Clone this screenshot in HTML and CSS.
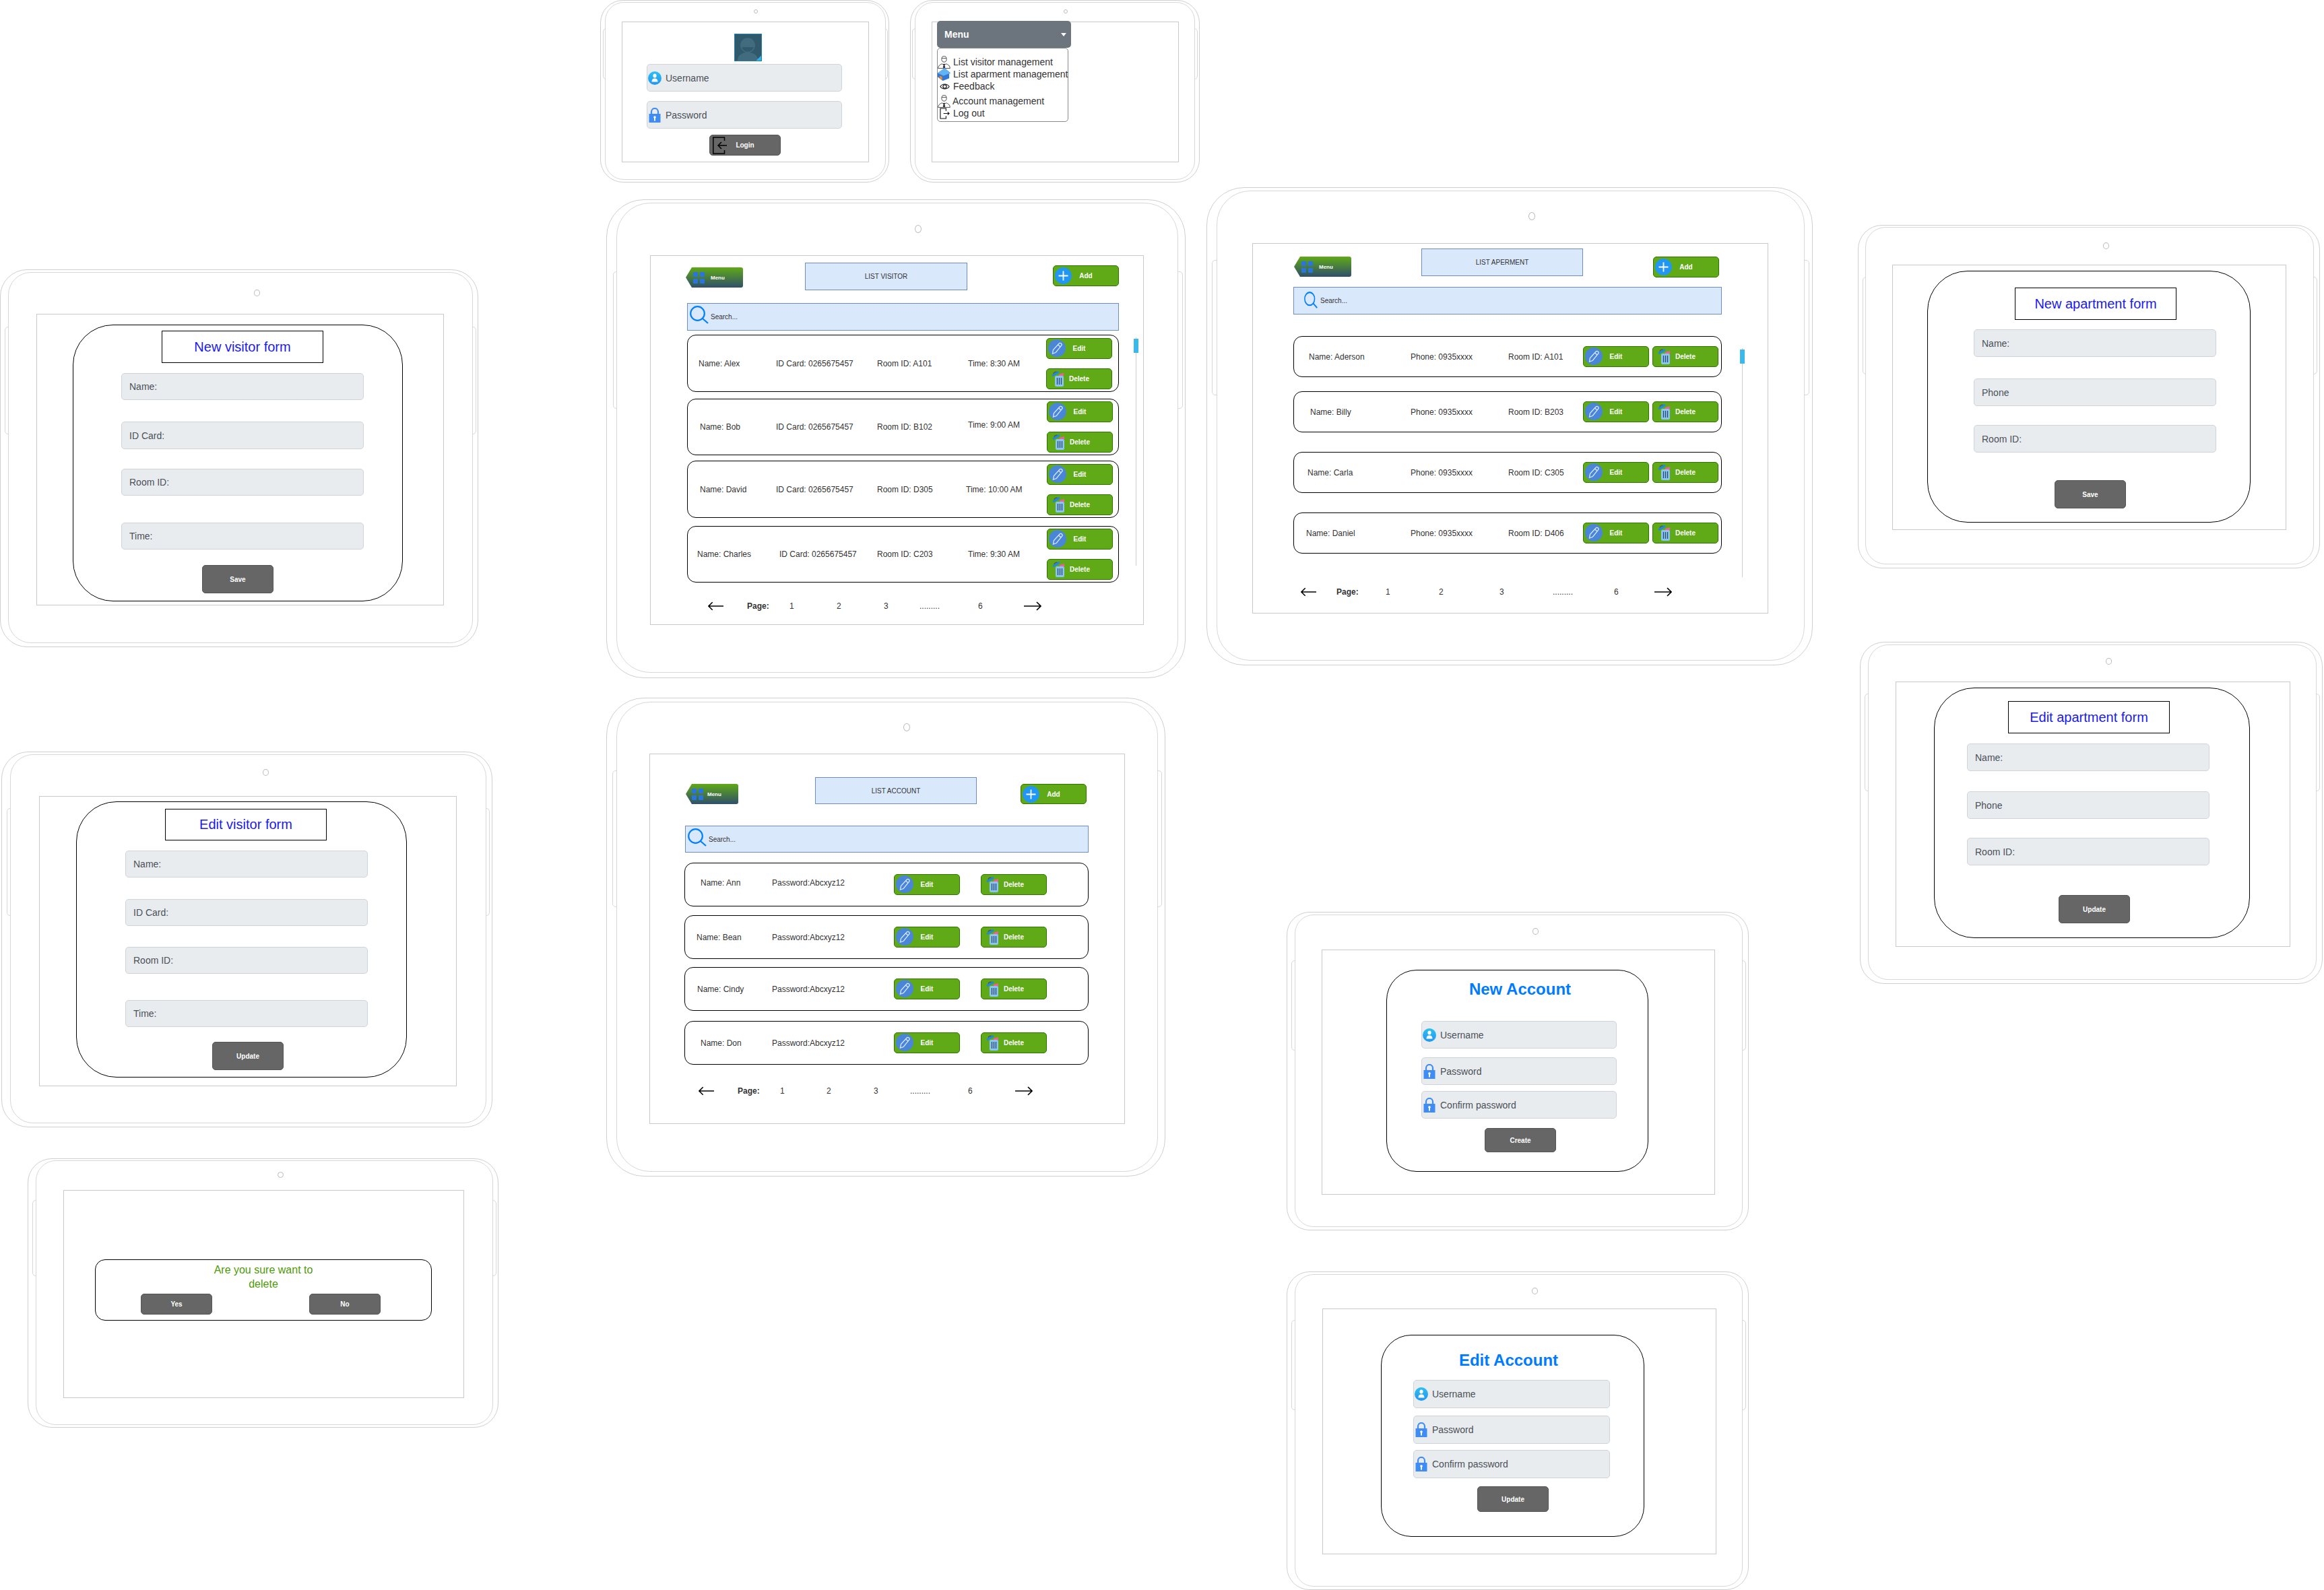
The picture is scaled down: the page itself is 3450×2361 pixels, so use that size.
FILE: index.html
```html
<!DOCTYPE html>
<html lang="en">
  <head>
    <meta charset="UTF-8" />
    <title>Apartment management wireframes</title>
    <link rel="stylesheet" href="styles.css">
  </head>
  <body>
    <svg class="svg-defs" aria-hidden="true">
      <defs>
        <linearGradient id="blueFade" x1="0" y1="0" x2="0" y2="1">
          <stop offset="0" stop-color="#2dc0f0" />
          <stop offset="1" stop-color="#2196f3" />
        </linearGradient>
        <symbol id="ic-user" viewBox="0 0 20 20">
          <circle cx="10" cy="10" r="10" fill="url(#blueFade)" />
          <ellipse cx="10" cy="6.5" rx="2.6" ry="3" fill="#fff" />
          <path d="M5.5 15.5c0-3.2 1.6-5 4.5-5s4.500 1.800 4.500 5z" fill="#fff" />
        </symbol>
        <symbol id="ic-lock" viewBox="0 0 17 22">
          <path d="M3.500 10V6a5 5 0 0 1 10 0v4" fill="none" stroke="#3f8cf5" stroke-width="2.200" />
          <rect y="9" width="17" height="13" fill="#3f8cf5" />
          <circle cx="8.500" cy="14" r="1.800" fill="#fff" />
          <rect x="7.500" y="14" width="2" height="5.500" fill="#fff" />
        </symbol>
        <symbol id="ic-avatar" viewBox="0 0 41 41">
          <rect width="41" height="41" fill="#30596c" />
          <circle cx="20" cy="17" r="11.500" fill="#416b7e" />
          <path d="M11 20h18c-1 5-5 7-9 7s-8-2-9-7z" fill="#30596c" />
          <path d="M4 41c0-8 7-13 16-13s16 5 16 13z" fill="#416b7e" />
          <path d="M41 33v8h-8z" fill="#2fb2e8" />
        </symbol>
        <symbol id="ic-door-in" viewBox="0 0 22 26">
          <path d="M17.500 6V1H.8v24h16.700v-5" fill="none" stroke="#000" stroke-width="1.500" />
          <path d="M21 13H8M13 8l-5 5 5 5" fill="none" stroke="#000" stroke-width="1.500" />
        </symbol>
        <symbol id="ic-door-out" viewBox="0 0 16 18">
          <path d="M10 5V1H1v16h9v-4" fill="none" stroke="#111" stroke-width="1.200" />
          <path d="M6 9h9M12.500 6.800 15 9l-2.500 2.200" fill="none" stroke="#111" stroke-width="1.200" />
        </symbol>
        <symbol id="ic-staff" viewBox="0 0 20 20">
          <ellipse cx="10" cy="5" rx="3.800" ry="4.600" fill="#fff" stroke="#333" stroke-width=".9" />
          <path d="M6.400 3.600h7.200" stroke="#333" stroke-width=".9" />
          <path d="M.7 19.400c0-4 3-6 6.200-7l3.100 2.300 3.100-2.300c3.200 1 6.200 3 6.200 7z" fill="#fff" stroke="#333" stroke-width=".9" />
          <path d="M8.400 13.400 10 12l1.600 1.400-1 1.600 1.400 3-2 1.200-2-1.200 1.400-3z" fill="#222" />
        </symbol>
        <symbol id="ic-house" viewBox="0 0 20 20">
          <path d="M11 0l9 8-2 1v7l-10 4-8-6V8z" fill="#2f78d8" />
          <path d="M11 0l9 8-11 4-9-4z" fill="#63b3f2" />
          <path d="M3 12l4 1.500V19l-4-2.500z" fill="#f08a24" />
        </symbol>
        <symbol id="ic-eye" viewBox="0 0 16 12">
          <path d="M1 6c3-5 11-5 14 0-3 5-11 5-14 0z" fill="none" stroke="#111" stroke-width="1.200" />
          <circle cx="8" cy="6" r="2.800" fill="none" stroke="#111" stroke-width="1.200" />
        </symbol>
        <symbol id="ic-plus" viewBox="0 0 25 25">
          <circle cx="12.500" cy="12.500" r="12.500" fill="#2196f3" />
          <path d="M5.500 12.500h14M12.500 5.500v14" stroke="#fff" stroke-width="1.800" />
        </symbol>
        <symbol id="ic-pencil" viewBox="0 0 26 26">
          <circle cx="13" cy="13" r="13" fill="#4a86d8" />
          <path d="M6.500 21l1-5.500L16 6.200a2.300 2.300 0 0 1 3.600 3L11.200 19.500z" fill="none" stroke="#d9e8ff" stroke-width="1.300" />
          <path d="M14.500 8l3.700 3" stroke="#d9e8ff" stroke-width="1.300" />
        </symbol>
        <symbol id="ic-trash" viewBox="0 0 18 24">
          <path d="M3 5.500a3.500 3.500 0 0 1 5-3" fill="none" stroke="#555" stroke-width="1.500" />
          <path d="M1 8l10-6" stroke="#1e88e5" stroke-width="3" />
          <path d="M11 6l7-2v4h-7z" fill="#f0609a" />
          <rect x="5" y="8" width="13" height="16" rx="2" fill="#8ac4f5" />
          <path d="M8.500 11v10M11.500 11v10M14.500 11v10" stroke="#2c4a66" stroke-width="1.300" />
        </symbol>
        <symbol id="ic-search" viewBox="0 0 28 28">
          <circle cx="11.500" cy="11.500" r="10.300" fill="none" stroke="#007fff" stroke-width="2.200" />
          <path d="M19 19l8 7" stroke="#007fff" stroke-width="2.200" />
        </symbol>
        <symbol id="ic-arrow-left" viewBox="0 0 24 14">
          <path d="M24 7H1M7 1 1 7l6 6" fill="none" stroke="#000" stroke-width="1.600" />
        </symbol>
        <symbol id="ic-arrow-right" viewBox="0 0 26 14">
          <path d="M0 7h25M19 1l6 6-6 6" fill="none" stroke="#000" stroke-width="1.600" />
        </symbol>
      </defs>
    </svg>

    <main class="canvas">
      <!-- login -->
      <section class="tablet t-login">
        <span class="camera"></span>
        <div class="bezel">
          <div class="screen">
            <svg class="avatar"><use href="#ic-avatar" /></svg>
            <div class="field with-icon"><svg class="ic-field"><use href="#ic-user" /></svg>Username</div>
            <div class="field with-icon"><svg class="ic-field"><use href="#ic-lock" /></svg>Password</div>
            <button class="btn-dark"><svg class="ic-door"><use href="#ic-door-in" /></svg>Login</button>
          </div>
        </div>
      </section>

      <!-- menu -->
      <section class="tablet t-menu">
        <span class="camera"></span>
        <div class="bezel">
          <div class="screen">
            <div class="menu-head">Menu<span class="caret"></span></div>
            <ul class="menu-list">
              <li><svg class="ic-menu"><use href="#ic-staff" /></svg>List visitor management</li>
              <li><svg class="ic-menu"><use href="#ic-house" /></svg>List aparment management</li>
              <li><svg class="ic-menu ic-small"><use href="#ic-eye" /></svg>Feedback</li>
              <li><svg class="ic-menu"><use href="#ic-staff" /></svg>Account management</li>
              <li><svg class="ic-menu ic-small"><use href="#ic-door-out" /></svg>Log out</li>
            </ul>
          </div>
        </div>
      </section>

      <!-- list visitor -->
      <section class="tablet t-visitors">
        <span class="camera"></span>
        <div class="bezel">
          <div class="screen">
            <div class="list-head">
              <div class="menu-tag"><span class="dots-grid"><i></i><i></i><i></i><i></i></span>Menu</div>
              <div class="list-title">LIST VISITOR</div>
              <button class="btn-green btn-add"><svg class="ic-plus"><use href="#ic-plus" /></svg>Add</button>
            </div>
            <div class="search"><svg class="ic-search"><use href="#ic-search" /></svg>Search...</div>
            <div class="rows">
              <div class="row">
                <span class="name">Name: Alex</span><span class="col-b">ID Card: 0265675457</span><span class="col-c">Room ID: A101</span><span class="col-d">Time: 8:30 AM</span>
                <div class="actions"><button class="btn-green"><svg class="ic-edit"><use href="#ic-pencil" /></svg>Edit</button><button class="btn-green"><svg class="ic-trash"><use href="#ic-trash" /></svg>Delete</button></div>
              </div>
              <div class="row">
                <span class="name">Name: Bob</span><span class="col-b">ID Card: 0265675457</span><span class="col-c">Room ID: B102</span><span class="col-d">Time: 9:00 AM</span>
                <div class="actions"><button class="btn-green"><svg class="ic-edit"><use href="#ic-pencil" /></svg>Edit</button><button class="btn-green"><svg class="ic-trash"><use href="#ic-trash" /></svg>Delete</button></div>
              </div>
              <div class="row">
                <span class="name">Name: David</span><span class="col-b">ID Card: 0265675457</span><span class="col-c">Room ID: D305</span><span class="col-d">Time: 10:00 AM</span>
                <div class="actions"><button class="btn-green"><svg class="ic-edit"><use href="#ic-pencil" /></svg>Edit</button><button class="btn-green"><svg class="ic-trash"><use href="#ic-trash" /></svg>Delete</button></div>
              </div>
              <div class="row">
                <span class="name">Name: Charles</span><span class="col-b">ID Card: 0265675457</span><span class="col-c">Room ID: C203</span><span class="col-d">Time: 9:30 AM</span>
                <div class="actions"><button class="btn-green"><svg class="ic-edit"><use href="#ic-pencil" /></svg>Edit</button><button class="btn-green"><svg class="ic-trash"><use href="#ic-trash" /></svg>Delete</button></div>
              </div>
            </div>
            <div class="pager">
              <svg class="ic-arrow-l"><use href="#ic-arrow-left" /></svg><b>Page:</b><span>1</span><span>2</span><span>3</span><span>.........</span><span>6</span><svg class="ic-arrow-r"><use href="#ic-arrow-right" /></svg>
            </div>
            <div class="scroll"><span></span></div>
          </div>
        </div>
      </section>

      <!-- list apartment -->
      <section class="tablet t-apartments">
        <span class="camera"></span>
        <div class="bezel">
          <div class="screen">
            <div class="list-head">
              <div class="menu-tag"><span class="dots-grid"><i></i><i></i><i></i><i></i></span>Menu</div>
              <div class="list-title">LIST APERMENT</div>
              <button class="btn-green btn-add"><svg class="ic-plus"><use href="#ic-plus" /></svg>Add</button>
            </div>
            <div class="search"><svg class="ic-search" viewBox="0 0 28 28" preserveAspectRatio="none"><use href="#ic-search" /></svg>Search...</div>
            <div class="rows">
              <div class="row">
                <span class="name">Name: Aderson</span><span class="col-b">Phone: 0935xxxx</span><span class="col-c">Room ID: A101</span>
                <div class="actions"><button class="btn-green"><svg class="ic-edit"><use href="#ic-pencil" /></svg>Edit</button><button class="btn-green"><svg class="ic-trash"><use href="#ic-trash" /></svg>Delete</button></div>
              </div>
              <div class="row">
                <span class="name">Name: Billy</span><span class="col-b">Phone: 0935xxxx</span><span class="col-c">Room ID: B203</span>
                <div class="actions"><button class="btn-green"><svg class="ic-edit"><use href="#ic-pencil" /></svg>Edit</button><button class="btn-green"><svg class="ic-trash"><use href="#ic-trash" /></svg>Delete</button></div>
              </div>
              <div class="row">
                <span class="name">Name: Carla</span><span class="col-b">Phone: 0935xxxx</span><span class="col-c">Room ID: C305</span>
                <div class="actions"><button class="btn-green"><svg class="ic-edit"><use href="#ic-pencil" /></svg>Edit</button><button class="btn-green"><svg class="ic-trash"><use href="#ic-trash" /></svg>Delete</button></div>
              </div>
              <div class="row">
                <span class="name">Name: Daniel</span><span class="col-b">Phone: 0935xxxx</span><span class="col-c">Room ID: D406</span>
                <div class="actions"><button class="btn-green"><svg class="ic-edit"><use href="#ic-pencil" /></svg>Edit</button><button class="btn-green"><svg class="ic-trash"><use href="#ic-trash" /></svg>Delete</button></div>
              </div>
            </div>
            <div class="pager">
              <svg class="ic-arrow-l"><use href="#ic-arrow-left" /></svg><b>Page:</b><span>1</span><span>2</span><span>3</span><span>.........</span><span>6</span><svg class="ic-arrow-r"><use href="#ic-arrow-right" /></svg>
            </div>
            <div class="scroll"><span></span></div>
          </div>
        </div>
      </section>

      <!-- list account -->
      <section class="tablet t-accounts">
        <span class="camera"></span>
        <div class="bezel">
          <div class="screen">
            <div class="list-head">
              <div class="menu-tag"><span class="dots-grid"><i></i><i></i><i></i><i></i></span>Menu</div>
              <div class="list-title">LIST ACCOUNT</div>
              <button class="btn-green btn-add"><svg class="ic-plus"><use href="#ic-plus" /></svg>Add</button>
            </div>
            <div class="search"><svg class="ic-search"><use href="#ic-search" /></svg>Search...</div>
            <div class="rows">
              <div class="row">
                <span class="name">Name: Ann</span><span class="col-b">Password:Abcxyz12</span>
                <div class="actions"><button class="btn-green"><svg class="ic-edit"><use href="#ic-pencil" /></svg>Edit</button><button class="btn-green"><svg class="ic-trash"><use href="#ic-trash" /></svg>Delete</button></div>
              </div>
              <div class="row">
                <span class="name">Name: Bean</span><span class="col-b">Password:Abcxyz12</span>
                <div class="actions"><button class="btn-green"><svg class="ic-edit"><use href="#ic-pencil" /></svg>Edit</button><button class="btn-green"><svg class="ic-trash"><use href="#ic-trash" /></svg>Delete</button></div>
              </div>
              <div class="row">
                <span class="name">Name: Cindy</span><span class="col-b">Password:Abcxyz12</span>
                <div class="actions"><button class="btn-green"><svg class="ic-edit"><use href="#ic-pencil" /></svg>Edit</button><button class="btn-green"><svg class="ic-trash"><use href="#ic-trash" /></svg>Delete</button></div>
              </div>
              <div class="row">
                <span class="name">Name: Don</span><span class="col-b">Password:Abcxyz12</span>
                <div class="actions"><button class="btn-green"><svg class="ic-edit"><use href="#ic-pencil" /></svg>Edit</button><button class="btn-green"><svg class="ic-trash"><use href="#ic-trash" /></svg>Delete</button></div>
              </div>
            </div>
            <div class="pager">
              <svg class="ic-arrow-l"><use href="#ic-arrow-left" /></svg><b>Page:</b><span>1</span><span>2</span><span>3</span><span>.........</span><span>6</span><svg class="ic-arrow-r"><use href="#ic-arrow-right" /></svg>
            </div>
          </div>
        </div>
      </section>

      <!-- visitor forms -->
      <section class="tablet t-new-visitor">
        <span class="camera"></span>
        <div class="bezel">
          <div class="screen">
            <form class="card">
              <h2 class="form-title">New visitor form</h2>
              <div class="field">Name:</div>
              <div class="field">ID Card:</div>
              <div class="field">Room ID:</div>
              <div class="field">Time:</div>
              <button class="btn-dark">Save</button>
            </form>
          </div>
        </div>
      </section>

      <section class="tablet t-edit-visitor">
        <span class="camera"></span>
        <div class="bezel">
          <div class="screen">
            <form class="card">
              <h2 class="form-title">Edit visitor form</h2>
              <div class="field">Name:</div>
              <div class="field">ID Card:</div>
              <div class="field">Room ID:</div>
              <div class="field">Time:</div>
              <button class="btn-dark">Update</button>
            </form>
          </div>
        </div>
      </section>

      <!-- delete confirm -->
      <section class="tablet t-confirm">
        <span class="camera"></span>
        <div class="bezel">
          <div class="screen">
            <div class="confirm">
              <p>Are you sure want to<br />delete</p>
              <div class="confirm-actions">
                <button class="btn-dark">Yes</button>
                <button class="btn-dark">No</button>
              </div>
            </div>
          </div>
        </div>
      </section>

      <!-- apartment forms -->
      <section class="tablet t-new-apartment">
        <span class="camera"></span>
        <div class="bezel">
          <div class="screen">
            <form class="card">
              <h2 class="form-title">New apartment form</h2>
              <div class="field">Name:</div>
              <div class="field">Phone</div>
              <div class="field">Room ID:</div>
              <button class="btn-dark">Save</button>
            </form>
          </div>
        </div>
      </section>

      <section class="tablet t-edit-apartment">
        <span class="camera"></span>
        <div class="bezel">
          <div class="screen">
            <form class="card">
              <h2 class="form-title">Edit apartment form</h2>
              <div class="field">Name:</div>
              <div class="field">Phone</div>
              <div class="field">Room ID:</div>
              <button class="btn-dark">Update</button>
            </form>
          </div>
        </div>
      </section>

      <!-- account forms -->
      <section class="tablet t-new-account">
        <span class="camera"></span>
        <div class="bezel">
          <div class="screen">
            <form class="card">
              <h2 class="account-title">New Account</h2>
              <div class="field with-icon"><svg class="ic-field"><use href="#ic-user" /></svg>Username</div>
              <div class="field with-icon"><svg class="ic-field"><use href="#ic-lock" /></svg>Password</div>
              <div class="field with-icon"><svg class="ic-field"><use href="#ic-lock" /></svg>Confirm password</div>
              <button class="btn-dark">Create</button>
            </form>
          </div>
        </div>
      </section>

      <section class="tablet t-edit-account">
        <span class="camera"></span>
        <div class="bezel">
          <div class="screen">
            <form class="card">
              <h2 class="account-title">Edit Account</h2>
              <div class="field with-icon"><svg class="ic-field"><use href="#ic-user" /></svg>Username</div>
              <div class="field with-icon"><svg class="ic-field"><use href="#ic-lock" /></svg>Password</div>
              <div class="field with-icon"><svg class="ic-field"><use href="#ic-lock" /></svg>Confirm password</div>
              <button class="btn-dark">Update</button>
            </form>
          </div>
        </div>
      </section>
    </main>
  </body>
</html>
```

FILE: styles.css
```css
body {
  margin: 0;
  background: #fff;
  font-family: "Liberation Sans", Arial, sans-serif;
  color: #333;
}

.svg-defs {
  position: absolute;
  width: 0;
  height: 0;
}

.canvas {
  position: relative;
  width: 3450px;
  height: 2361px;
  overflow: hidden;
}

/* tablet frame */
.tablet {
  position: absolute;
  box-sizing: border-box;
  border: 1px solid #cfcfcf;
  border-radius: var(--r);
  background: #fff;
}
.tablet::before,
.tablet::after {
  content: "";
  position: absolute;
  top: var(--side-top);
  height: var(--side-h);
  width: 12px;
  box-sizing: border-box;
  border: 1px solid #d8d8d8;
  border-radius: 5px;
}
.tablet::before {
  left: var(--side-l);
}
.tablet::after {
  right: var(--side-r);
}
.bezel {
  position: relative;
  z-index: 1;
  box-sizing: border-box;
  height: 100%;
  display: flex;
  border: 1px solid #d8d8d8;
  border-radius: calc(var(--r) - 6px);
  background: #fff;
}
.camera {
  position: absolute;
  z-index: 2;
  left: var(--cam-x);
  top: var(--cam-y);
  width: var(--cam-w, 9px);
  height: var(--cam-h, 10px);
  box-sizing: border-box;
  border: 1px solid #bbb;
  border-radius: 50%;
}
.screen {
  position: relative;
  flex: 1;
  min-width: 0;
  box-sizing: border-box;
  display: flex;
  flex-direction: column;
  align-items: flex-start;
  border: 1px solid #c9c9c9;
}

/* tablets on the canvas */
.t-login { left: 891px; top: 0; width: 429px; height: 271px; padding: 2px 4px 3px 6px; --r: 34px; --side-top: 41px; --side-h: 76px; --side-l: 3px; --side-r: 1px; --cam-x: 227px; --cam-y: 13px; --cam-w: 6px; --cam-h: 6px; }
.t-login .bezel { padding: 28px 24px 25px 24px; }
.t-menu { left: 1351px; top: 0; width: 430px; height: 271px; padding: 2px 6px 3px 6px; --r: 34px; --side-top: 41px; --side-h: 76px; --side-l: 2px; --side-r: 2px; --cam-x: 227px; --cam-y: 13px; --cam-w: 6px; --cam-h: 6px; }
.t-menu .bezel { padding: 28px 23px 25px 24px; }
.t-visitors { left: 900px; top: 296px; width: 860px; height: 711px; padding: 4px 10px 7px 14px; --r: 56px; --side-top: 106px; --side-h: 204px; --side-l: 9px; --side-r: 3px; --cam-x: 457px; --cam-y: 37px; --cam-w: 10px; --cam-h: 12px; }
.t-visitors .bezel { padding: 77px 50px 70px 49px; }
.t-apartments { left: 1791px; top: 278px; width: 900px; height: 710px; padding: 4px 11px 6px 14px; --r: 56px; --side-top: 107px; --side-h: 201px; --side-l: 7px; --side-r: 4px; --cam-x: 477px; --cam-y: 36px; --cam-w: 10px; --cam-h: 12px; }
.t-apartments .bezel { padding: 77px 53px 69px 52px; }
.t-accounts { left: 900px; top: 1036px; width: 830px; height: 711px; padding: 5px 10px 6px 14px; --r: 56px; --side-top: 107px; --side-h: 203px; --side-l: 8px; --side-r: 4px; --cam-x: 440px; --cam-y: 37px; --cam-w: 10px; --cam-h: 12px; }
.t-accounts .bezel { padding: 76px 48px 70px 48px; }
.t-new-visitor { left: 0; top: 400px; width: 710px; height: 561px; padding: 3px 7px 5px 11px; --r: 40px; --side-top: 84px; --side-h: 160px; --side-l: 6px; --side-r: 2px; --cam-x: 376px; --cam-y: 29px; }
.t-new-visitor .bezel { padding: 61px 42px 55px 41px; }
.t-edit-visitor { left: 2px; top: 1116px; width: 729px; height: 558px; padding: 3px 8px 5px 12px; --r: 40px; --side-top: 83px; --side-h: 160px; --side-l: 7px; --side-r: 3px; --cam-x: 387px; --cam-y: 25px; }
.t-edit-visitor .bezel { padding: 61px 43px 54px 42px; }
.t-confirm { left: 41px; top: 1720px; width: 699px; height: 400px; padding: 2px 7px 3px 11px; --r: 36px; --side-top: 61px; --side-h: 113px; --side-l: 6px; --side-r: 2px; --cam-x: 370px; --cam-y: 19px; --cam-h: 9px; }
.t-confirm .bezel { padding: 43px 42px 39px 40px; }
.t-new-apartment { left: 2758px; top: 334px; width: 686px; height: 510px; padding: 2px 8px 5px 10px; --r: 36px; --side-top: 76px; --side-h: 145px; --side-l: 6px; --side-r: 3px; --cam-x: 363px; --cam-y: 25px; }
.t-new-apartment .bezel { padding: 55px 40px 50px 39px; }
.t-edit-apartment { left: 2761px; top: 953px; width: 687px; height: 508px; padding: 3px 8px 5px 11px; --r: 36px; --side-top: 76px; --side-h: 145px; --side-l: 6px; --side-r: 3px; --cam-x: 364px; --cam-y: 23px; }
.t-edit-apartment .bezel { padding: 54px 38px 48px 40px; }
.t-new-account { left: 1910px; top: 1354px; width: 686px; height: 473px; padding: 3px 8px 4px 11px; --r: 34px; --side-top: 71px; --side-h: 134px; --side-l: 6px; --side-r: 3px; --cam-x: 364px; --cam-y: 23px; }
.t-new-account .bezel { padding: 51px 40px 47px 39px; }
.t-edit-account { left: 1910px; top: 1888px; width: 686px; height: 473px; padding: 3px 8px 4px 11px; --r: 34px; --side-top: 71px; --side-h: 134px; --side-l: 6px; --side-r: 3px; --cam-x: 363px; --cam-y: 23px; }
.t-edit-account .bezel { padding: 50px 38px 47px 40px; }

/* shared controls */
.field {
  box-sizing: border-box;
  width: 360px;
  height: 40px;
  display: flex;
  align-items: center;
  padding-left: 11px;
  background: #e9ecef;
  border: 1px solid #ced4da;
  border-radius: 5px;
  font-size: 14px;
  color: #495057;
}
.field.with-icon {
  width: 290px;
  height: 41px;
  padding-left: 1px;
}
.ic-field {
  width: 20px;
  height: 22px;
  margin-right: 6px;
  flex: none;
}
.btn-dark {
  position: relative;
  box-sizing: border-box;
  width: 106px;
  height: 42px;
  padding: 0;
  background: #666;
  border: 1px solid #555;
  border-radius: 5px;
  color: #fff;
  font: bold 10px "Liberation Sans", Arial, sans-serif;
}
.btn-green {
  position: relative;
  box-sizing: border-box;
  width: 98px;
  height: 31px;
  padding: 0;
  background: #60a917;
  border: 1px solid #2d7600;
  border-radius: 5px;
  color: #fff;
  font: bold 10px "Liberation Sans", Arial, sans-serif;
}
.ic-edit {
  position: absolute;
  left: 2px;
  top: 1px;
  width: 26px;
  height: 26px;
}
.ic-trash {
  position: absolute;
  left: 7px;
  top: 2px;
  width: 18px;
  height: 24px;
}
.ic-plus {
  position: absolute;
  left: 2px;
  top: 2px;
  width: 25px;
  height: 25px;
}

/* login */
.t-login .screen {
  align-items: flex-start;
  padding: 17px 0 0 36px;
}
.avatar {
  width: 41px;
  height: 41px;
  margin: 0 0 4px 130px;
  box-sizing: border-box;
  border: 1px solid #1f7fa6;
}
.t-login .field + .field {
  margin-top: 14px;
}
.t-login .btn-dark {
  width: 106px;
  height: 31px;
  margin: 9px 0 0 93px;
}
.ic-door {
  position: absolute;
  left: 4px;
  top: 2px;
  width: 22px;
  height: 26px;
}

/* menu */
.t-menu .screen {
  padding-left: 7px;
}
.menu-head {
  box-sizing: border-box;
  width: 199px;
  height: 40px;
  margin-top: -2px;
  display: flex;
  align-items: center;
  justify-content: space-between;
  padding: 0 7px 0 11px;
  background: #6c757d;
  border-radius: 5px;
  color: #fff;
  font-size: 14px;
  font-weight: bold;
}
.caret {
  width: 0;
  height: 0;
  border-left: 4px solid transparent;
  border-right: 4px solid transparent;
  border-top: 5px solid #fff;
}
.menu-list {
  box-sizing: border-box;
  width: 195px;
  height: 110px;
  margin: 0;
  padding: 11px 0 0;
  list-style: none;
  border: 1px solid #8a8a8a;
  border-radius: 5px;
  font-size: 14px;
  line-height: 18px;
}
.menu-list li {
  display: flex;
  align-items: center;
  height: 18px;
  white-space: nowrap;
}
.menu-list li:nth-child(4) {
  margin-top: 4px;
}
.menu-list li:nth-child(4) .ic-menu {
  margin-right: 3px;
}
.ic-menu {
  width: 19px;
  height: 19px;
  flex: none;
  margin-right: 4px;
}
.ic-small {
  width: 15px;
  height: 17px;
  margin-left: 3px;
  margin-right: 5px;
}

/* list screens */
.list-head {
  display: flex;
  align-items: flex-start;
}
.menu-tag {
  box-sizing: border-box;
  width: var(--tag-w, 85px);
  height: 30px;
  display: flex;
  align-items: center;
  gap: 9px;
  padding-left: 11px;
  background: linear-gradient(#60a917, #2f4f6a);
  border-radius: 0 3px 3px 0;
  clip-path: polygon(0 50%, 9px 0, 100% 0, 100% 100%, 9px 100%);
  color: #fff;
  font-size: 8px;
  font-weight: bold;
}
.dots-grid {
  display: grid;
  grid-template-columns: 7px 7px;
  gap: 3px;
}
.dots-grid i {
  height: 7px;
  border-radius: 1px;
  background: #2a74e0;
}
.list-title {
  box-sizing: border-box;
  width: 240px;
  height: 41px;
  display: flex;
  align-items: center;
  justify-content: center;
  background: #dae8fc;
  border: 1px solid #6c8ebf;
  font-size: 10px;
}
.search {
  box-sizing: border-box;
  height: 41px;
  display: flex;
  align-items: center;
  padding-left: 3px;
  background: #dae8fc;
  border: 1px solid #6c8ebf;
  font-size: 10px;
}
.ic-search {
  width: 28px;
  height: 28px;
  margin: -5px 3px 0 0;
  flex: none;
}
.row {
  box-sizing: border-box;
  display: flex;
  align-items: center;
  border: 1px solid #000;
  border-radius: 13px;
  background: #fff;
  font-size: 12px;
  white-space: nowrap;
}
.name,
.col-b,
.col-c,
.col-d {
  flex: none;
}
.actions {
  display: flex;
  flex: none;
}
.pager {
  display: grid;
  align-items: center;
  justify-items: start;
  font-size: 12px;
}
.pager b {
  font-weight: bold;
}
.ic-arrow-l {
  width: 23px;
  height: 14px;
}
.ic-arrow-r {
  width: 26px;
  height: 14px;
}
.scroll {
  position: absolute;
  width: 1px;
  background: #ccc;
}
.scroll span {
  position: absolute;
  left: -3px;
  top: 2px;
  width: 7px;
  height: 21px;
  background: #3bb9ea;
}

/* list visitor */
.t-visitors .screen { padding: 10px 0 0 54px; }
.t-visitors .menu-tag { margin: 7px 0 0 -2px; }
.t-visitors .list-title { width: 241px; margin-left: 92px; }
.t-visitors .btn-add { margin: 4px 0 0 127px; }
.t-visitors .search { width: 641px; margin-top: 19px; }
.t-visitors .rows { margin-top: 6px; }
.t-visitors .row { width: 641px; height: 85px; padding-left: 16px; }
.t-visitors .row:nth-child(2) { height: 84px; margin-top: 10px; }
.t-visitors .row:nth-child(3) { margin-top: 8px; }
.t-visitors .row:nth-child(4) { height: 84px; margin-top: 12px; }
.t-visitors .name { width: 115px; }
.t-visitors .col-b { width: 150px; }
.t-visitors .col-c { width: 135px; }
.t-visitors .col-d { width: 116px; }
.t-visitors .actions { flex-direction: column; gap: 14px; }
.t-visitors .row:nth-child(n+2) .actions { margin-left: 1px; }
.t-visitors .row:nth-child(2) .name,
.t-visitors .row:nth-child(3) .name { padding-left: 2px; width: 113px; }
.t-visitors .row:nth-child(4) .name { margin-left: -2px; width: 122px; }
.t-visitors .row:nth-child(4) .col-b { width: 145px; }
.t-visitors .row:nth-child(2) .col-d { margin-bottom: 6px; }
.t-visitors .row:nth-child(3) .col-d { margin-left: -3px; width: 119px; }
.t-visitors .pager { margin: 28px 0 0 31px; grid-template-columns: 58px 63px 70px 70px 53px 87px 68px 26px; }
.t-visitors .scroll { left: 720px; top: 121px; height: 339px; }

/* list apartment */
.t-apartments .screen { padding: 7px 0 0 60px; }
.t-apartments .menu-tag { margin: 12px 0 0 1px; }
.t-apartments .list-title { margin-left: 104px; }
.t-apartments .btn-add { margin: 12px 0 0 104px; }
.t-apartments .search { width: 636px; margin-top: 14px; padding-left: 15px; }
.t-apartments .ic-search { width: 20px; height: 26px; margin: -2px 4px 0 0; }
.t-apartments .rows { margin-top: 32px; }
.t-apartments .row { width: 636px; height: 61px; padding-left: 22px; }
.t-apartments .row:nth-child(2) { margin-top: 21px; }
.t-apartments .row:nth-child(n+3) { margin-top: 29px; }
.t-apartments .name { width: 151px; }
.t-apartments .col-b { width: 145px; }
.t-apartments .col-c { width: 111px; }
.t-apartments .actions { gap: 5px; }
.t-apartments .row:nth-child(2) .name { padding-left: 2px; width: 149px; }
.t-apartments .row:nth-child(3) .name { margin-left: -2px; width: 153px; }
.t-apartments .row:nth-child(4) .name { margin-left: -4px; width: 155px; }
.t-apartments .pager { margin: 50px 0 0 11px; grid-template-columns: 53px 73px 79px 90px 79px 91px 60px 25px; }
.t-apartments .scroll { left: 726px; top: 155px; height: 340px; }

/* list account */
.t-accounts .screen { padding: 34px 0 0 52px; }
.t-accounts .menu-tag { --tag-w: 78px; margin: 10px 0 0 1px; gap: 6px; padding-left: 9px; }
.t-accounts .list-title { height: 40px; margin-left: 114px; }
.t-accounts .btn-add { height: 30px; margin: 10px 0 0 65px; }
.t-accounts .search { width: 599px; height: 40px; margin-top: 32px; }
.t-accounts .rows { margin: 15px 0 0 -1px; }
.t-accounts .row { width: 600px; height: 65px; padding-left: 23px; }
.t-accounts .row:nth-child(2) { margin-top: 13px; }
.t-accounts .row:nth-child(3) { margin-top: 12px; }
.t-accounts .row:nth-child(4) { margin-top: 15px; }
.t-accounts .name { width: 106px; }
.t-accounts .col-b { width: 181px; }
.t-accounts .actions { gap: 31px; }
.t-accounts .row:nth-child(1) span { margin-bottom: 6px; }
.t-accounts .row:nth-child(2) .name { margin-left: -6px; width: 112px; }
.t-accounts .row:nth-child(3) .name { margin-left: -5px; width: 111px; }
.t-accounts .pager { margin: 32px 0 0 20px; grid-template-columns: 58px 63px 69px 70px 54px 86px 70px 25px; }

/* form screens */
.card {
  box-sizing: border-box;
  display: flex;
  flex-direction: column;
  align-items: flex-start;
  background: #fff;
  border: 1px solid #000;
  border-radius: 60px;
}
.form-title {
  box-sizing: border-box;
  width: 240px;
  height: 48px;
  margin: 0;
  display: flex;
  align-items: center;
  justify-content: center;
  border: 1px solid #000;
  color: #1a1aee;
  font-size: 20px;
  font-weight: normal;
}
.account-title {
  align-self: stretch;
  margin: 0;
  text-align: center;
  color: #007bff;
  font-size: 24px;
  line-height: 28px;
}

.t-new-visitor .screen { padding: 15px 0 0 53px; }
.t-new-visitor .card { width: 490px; height: 411px; padding-top: 8px; }
.t-new-visitor .form-title { margin-left: 131px; }
.t-new-visitor .field { margin-left: 71px; }
.t-new-visitor .field:nth-child(2) { margin-top: 15px; }
.t-new-visitor .field:nth-child(3) { margin-top: 32px; height: 41px; }
.t-new-visitor .field:nth-child(4) { margin-top: 29px; }
.t-new-visitor .field:nth-child(5) { margin-top: 40px; }
.t-new-visitor .btn-dark { margin: 23px 0 0 191px; }

.t-edit-visitor .screen { padding: 7px 0 0 54px; }
.t-edit-visitor .card { width: 491px; height: 410px; padding-top: 10px; }
.t-edit-visitor .form-title { height: 47px; margin-left: 131px; }
.t-edit-visitor .field { margin-left: 72px; }
.t-edit-visitor .field:nth-child(2) { margin-top: 15px; }
.t-edit-visitor .field:nth-child(3) { margin-top: 32px; }
.t-edit-visitor .field:nth-child(4) { margin-top: 31px; }
.t-edit-visitor .field:nth-child(5) { margin-top: 39px; }
.t-edit-visitor .btn-dark { margin: 22px 0 0 201px; }

.t-new-apartment .screen { padding: 8px 0 0 51px; }
.t-new-apartment .card { width: 480px; height: 374px; padding-top: 24px; }
.t-new-apartment .form-title { margin-left: 129px; }
.t-new-apartment .field { margin-left: 68px; height: 41px; }
.t-new-apartment .field:nth-child(2) { margin-top: 14px; }
.t-new-apartment .field:nth-child(3) { margin-top: 32px; }
.t-new-apartment .field:nth-child(4) { margin-top: 28px; }
.t-new-apartment .btn-dark { margin: 41px 0 0 188px; }

.t-edit-apartment .screen { padding: 8px 0 0 56px; }
.t-edit-apartment .card { width: 469px; height: 372px; padding-top: 19px; }
.t-edit-apartment .form-title { margin-left: 109px; }
.t-edit-apartment .field { margin-left: 48px; height: 41px; }
.t-edit-apartment .field:nth-child(2) { margin-top: 15px; }
.t-edit-apartment .field:nth-child(3) { margin-top: 30px; }
.t-edit-apartment .field:nth-child(4) { margin-top: 28px; }
.t-edit-apartment .btn-dark { margin: 44px 0 0 184px; }

.t-new-account .screen { padding: 29px 0 0 95px; }
.t-new-account .card { width: 389px; height: 300px; padding-top: 14px; border-radius: 45px; }
.t-new-account .account-title { padding-left: 8px; }
.t-new-account .field { margin-left: 51px; }
.t-new-account .field:nth-child(2) { margin-top: 33px; }
.t-new-account .field:nth-child(3) { margin-top: 13px; }
.t-new-account .field:nth-child(4) { margin-top: 9px; }
.t-new-account .btn-dark { height: 36px; margin: 14px 0 0 145px; }

.t-edit-account .screen { padding: 38px 0 0 86px; }
.t-edit-account .card { width: 391px; height: 300px; padding-top: 23px; border-radius: 45px; }
.t-edit-account .account-title { padding-right: 12px; }
.t-edit-account .field { width: 292px; height: 42px; margin-left: 47px; }
.t-edit-account .field:nth-child(2) { margin-top: 15px; }
.t-edit-account .field:nth-child(3) { margin-top: 11px; }
.t-edit-account .field:nth-child(4) { margin-top: 9px; }
.t-edit-account .btn-dark { height: 38px; margin: 12px 0 0 142px; }

/* delete confirm */
.t-confirm .screen { padding: 102px 0 0 46px; }
.confirm {
  box-sizing: border-box;
  width: 500px;
  height: 91px;
  padding-top: 4px;
  border: 1px solid #000;
  border-radius: 15px;
}
.confirm p {
  margin: 0;
  text-align: center;
  color: #4d9a06;
  font-size: 16px;
  line-height: 21px;
}
.confirm-actions {
  display: flex;
  gap: 144px;
  margin: 4px 0 0 67px;
}
.confirm-actions .btn-dark {
  height: 31px;
}
```
